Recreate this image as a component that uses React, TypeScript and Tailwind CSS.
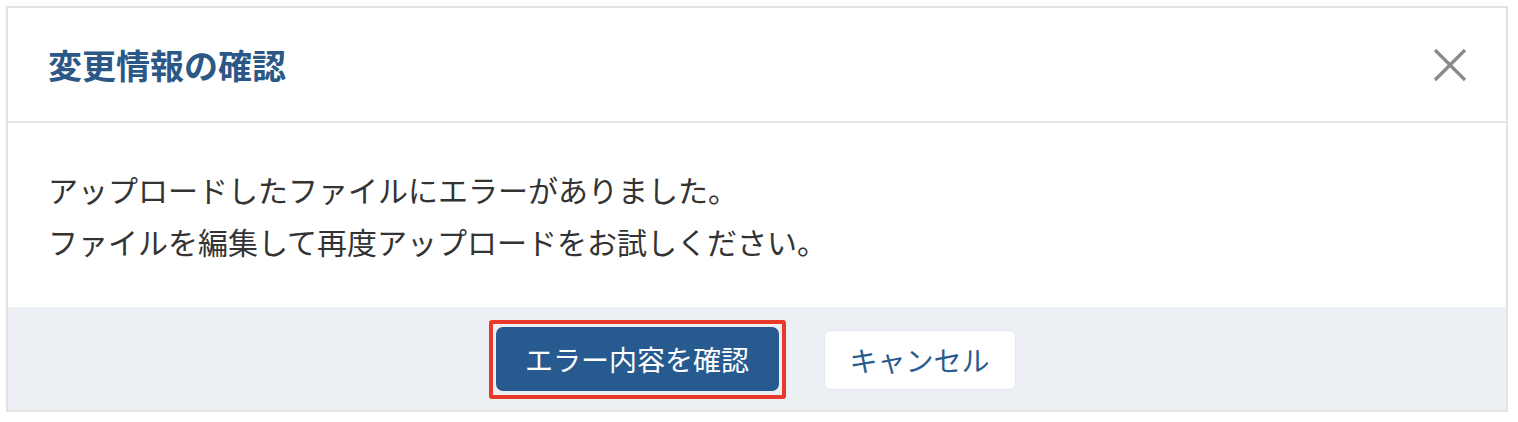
import React from 'react'

function CloseIcon() {
  return (
    <svg width="34" height="34" viewBox="0 0 34 34" fill="none">
      <path d="M2 2L32 32M32 2L2 32" stroke="#8a8a8a" strokeWidth="3.2" strokeLinecap="butt" />
    </svg>
  )
}

export default function App() {
  return (
    <div className="w-[1518px] h-[422px] bg-white pt-[6px] pl-[6px] font-['Noto_Sans_CJK_JP','Noto_Sans',sans-serif]">
      <div className="w-[1502px] border-2 border-[#e3e3e3] bg-white flex flex-col">
        {/* Header */}
        <div className="h-[115px] flex items-center justify-between pl-10 pr-[39px] border-b-2 border-[#e6e6e6]">
          <h3 className="text-[34px] font-bold text-[#2b5886] leading-none">変更情報の確認</h3>
          <button className="flex items-center justify-center">
            <CloseIcon />
          </button>
        </div>

        {/* Content */}
        <div className="h-[184px] flex flex-col justify-center px-10 text-[30px] leading-[52px] text-[#333333]">
          <p>アップロードしたファイルにエラーがありました。</p>
          <p>ファイルを編集して再度アップロードをお試しください。</p>
        </div>

        {/* Actions */}
        <div className="h-[103px] bg-[#eceff3] flex items-center justify-center gap-[38px] pr-[10px] pt-[2px]">
          <div className="border-4 border-[#e8392b] rounded-[3px] p-[3px] pb-[4px]">
            <button className="w-[283px] h-[64px] rounded-[7px] bg-[#275a8f] text-white text-[28px] flex items-center justify-center">
              エラー内容を確認
            </button>
          </div>
          <button className="w-[192px] h-[60px] rounded-[7px] bg-white border border-[#e4e8ee] text-[#2a5b8e] text-[28px] flex items-center justify-center">
            キャンセル
          </button>
        </div>
      </div>
    </div>
  )
}
